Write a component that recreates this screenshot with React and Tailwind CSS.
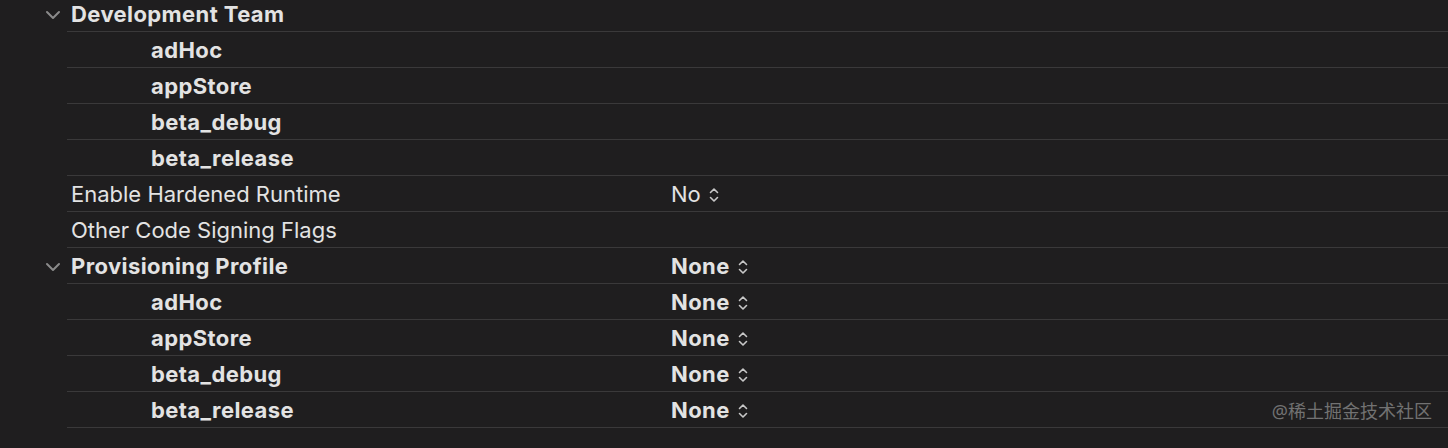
const rows = [
  { label: 'Development Team', bold: true, expand: true },
  { label: 'adHoc', bold: true, sub: true },
  { label: 'appStore', bold: true, sub: true },
  { label: 'beta_debug', bold: true, sub: true },
  { label: 'beta_release', bold: true, sub: true },
  { label: 'Enable Hardened Runtime', value: 'No' },
  { label: 'Other Code Signing Flags' },
  { label: 'Provisioning Profile', bold: true, expand: true, value: 'None', valueBold: true },
  { label: 'adHoc', bold: true, sub: true, value: 'None', valueBold: true },
  { label: 'appStore', bold: true, sub: true, value: 'None', valueBold: true },
  { label: 'beta_debug', bold: true, sub: true, value: 'None', valueBold: true },
  { label: 'beta_release', bold: true, sub: true, value: 'None', valueBold: true },
];

function Chevron() {
  return (
    <svg width="16" height="10" viewBox="0 0 16 10" className="text-[#8a8a8a]">
      <path d="M2 2 L8 8 L14 2" fill="none" stroke="currentColor" strokeWidth="2" strokeLinecap="round" strokeLinejoin="round" />
    </svg>
  );
}

function Stepper() {
  return (
    <svg width="10" height="16" viewBox="0 0 10 16" className="text-[#c8c8c8] ml-[8px]">
      <path d="M1.5 5.5 L5 2 L8.5 5.5 M1.5 10.5 L5 14 L8.5 10.5" fill="none" stroke="currentColor" strokeWidth="1.6" strokeLinecap="round" strokeLinejoin="round" />
    </svg>
  );
}

export default function App() {
  return (
    <div
      className="w-[1448px] h-[448px] bg-[#1f1e1f] overflow-hidden relative text-[#e3e3e3]"
      style={{ fontFamily: '"Inter", "Liberation Sans", sans-serif' }}
    >
      <div className="mt-[-4px]">
        {rows.map((r, i) => (
          <div key={i} className="flex h-[36px]">
            <div className="w-[67px] shrink-0 flex items-center justify-end pr-[6px] pt-[2px]">
              {r.expand && <Chevron />}
            </div>
            <div className="flex-1 flex items-center border-b border-[#3a393a] pt-[2px]">
              <div className={`w-[604px] shrink-0 text-[22px] ${r.bold ? 'font-bold tracking-[0.4px]' : 'font-normal'} ${r.sub ? 'pl-[84px]' : 'pl-[4px]'}`}>
                {r.label}
              </div>
              {r.value && (
                <div className={`flex items-center text-[22px] ${r.valueBold ? 'font-bold tracking-[0.4px]' : 'font-normal'}`}>
                  {r.value}
                  <Stepper />
                </div>
              )}
            </div>
          </div>
        ))}
      </div>
      <div
        className="absolute right-[16px] bottom-[23px] text-[18px] text-[#727272]"
        style={{ fontFamily: '"Noto Sans", "Noto Sans CJK SC", sans-serif' }}
      >
        @稀土掘金技术社区
      </div>
    </div>
  );
}
